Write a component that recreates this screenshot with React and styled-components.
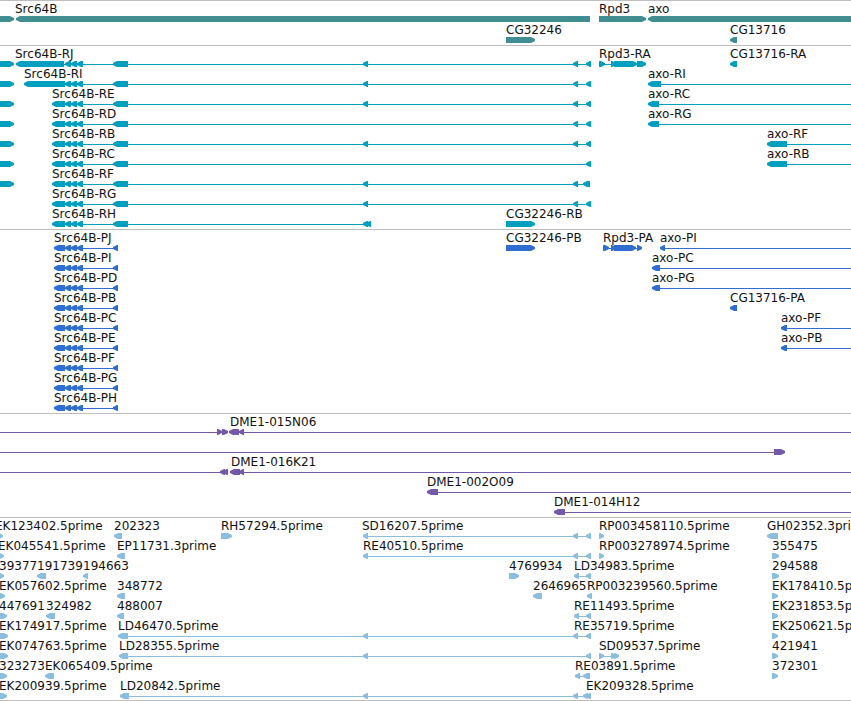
import React from 'react';
import styled, { createGlobalStyle } from 'styled-components';

const GlobalStyle = createGlobalStyle`
  body {
    margin: 0;
    background: #FFFFFF;
  }
`;

const Browser = styled.main`
  overflow: hidden;
  border-bottom: 1px solid #BEBEBE;
  font-family: "DejaVu Sans", Verdana, sans-serif;
  font-size: 12px;
  line-height: 16px;
`;

const Track = styled.section`
  display: grid;
  grid-auto-rows: ${({ $pitch }) => $pitch}px;
  padding-bottom: ${({ $gap }) => $gap}px;
  border-top: 1px solid #BEBEBE;
  color: ${({ $color }) => $color};
`;

const Row = styled.div`
  position: relative;
  display: flex;
  flex-direction: column;
  padding-top: 15px;
`;

const Glyphs = styled.svg`
  display: block;
  flex: none;
  width: 100%;
  height: 6px;
  overflow: visible;
  fill: currentColor;
`;

// labels sit at the genomic position of their feature
const Label = styled.span`
  position: absolute;
  top: 0;
  left: ${({ $x }) => $x}px;
  color: #111111;
  white-space: pre;
`;

const HEAD = 5;
const FAR = 4000;

const fwd = (name, x, exons, to) => ({ name, x, exons, to, dir: 1 });
const rev = (name, x, exons, to) => ({ name, x, exons, to, dir: -1 });
const edge = (end) => fwd('', 0, [[-20, end]]);

const SRC_TAIL = [[65, 71], [71, 77], [77, 83], [113, 128]];
const SRC_FULL = [...SRC_TAIL, [363, 368], [573, 578], [586, 591]];

const srcR = (name, exons, to = 590) => rev(`Src64B-${name}`, 52, [[52, 65], ...exons], to);

const srcP = (name) =>
  rev(`Src64B-${name}`, 54, [[54, 65], [65, 71], [71, 77], [77, 83], [113, 118]], 118);

const LONG_EST = [[363, 368], [573, 578], [586, 591]];

const tracks = [
  {
    id: 'genes',
    color: '#408E92',
    pitch: 21,
    gap: 2,
    rows: [
      [
        edge(14),
        rev('Src64B', 15, [[16, 590]]),
        fwd('Rpd3', 599, [[599, 646]]),
        rev('axo', 648, [[648, FAR]]),
      ],
      [fwd('CG32246', 506, [[506, 535]]), rev('CG13716', 730, [[730, 737]])],
    ],
  },
  {
    id: 'transcripts',
    color: '#009EBF',
    pitch: 20,
    gap: 3,
    rows: [
      [
        edge(14),
        rev('Src64B-RJ', 15, [[16, 64], ...SRC_FULL], 590),
        fwd('Rpd3-RA', 599, [[599, 605], [611, 616], [614, 637], [637, 646]], 640),
        rev('CG13716-RA', 730, [[730, 737]]),
      ],
      [
        edge(14),
        rev('Src64B-RI', 24, [[24, 65], ...SRC_FULL], 590),
        rev('axo-RI', 648, [[648, 661]], FAR),
      ],
      [edge(14), srcR('RE', SRC_FULL), rev('axo-RC', 648, [[648, 659]], FAR)],
      [
        edge(14),
        srcR('RD', [...SRC_TAIL, [573, 578], [586, 591]]),
        rev('axo-RG', 648, [[648, 659]], FAR),
      ],
      [edge(14), srcR('RB', SRC_FULL), rev('axo-RF', 767, [[767, 787]], FAR)],
      [edge(14), srcR('RC', [...SRC_TAIL, [586, 591]]), rev('axo-RB', 767, [[767, 787]], FAR)],
      [edge(14), srcR('RF', [...SRC_TAIL, [363, 368], [573, 578], [583, 590]])],
      [srcR('RG', SRC_FULL)],
      [
        srcR('RH', [...SRC_TAIL, [363, 368], [366, 371]], 371),
        fwd('CG32246-RB', 506, [[506, 535]]),
      ],
    ],
  },
  {
    id: 'proteins',
    color: '#306DD0',
    pitch: 20,
    gap: 3,
    rows: [
      [
        srcP('PJ'),
        fwd('CG32246-PB', 506, [[506, 535]]),
        fwd('Rpd3-PA', 603, [[603, 609], [611, 616], [614, 636], [637, 642]], 640),
        rev('axo-PI', 660, [[660, 665]], FAR),
      ],
      [srcP('PI'), rev('axo-PC', 652, [[652, 660]], FAR)],
      [srcP('PD'), rev('axo-PG', 652, [[652, 660]], FAR)],
      [srcP('PB'), rev('CG13716-PA', 730, [[730, 737]])],
      [srcP('PC'), rev('axo-PF', 781, [[781, 787]], FAR)],
      [srcP('PE'), rev('axo-PB', 781, [[781, 787]], FAR)],
      [srcP('PF')],
      [srcP('PG')],
      [srcP('PH')],
    ],
  },
  {
    id: 'clones',
    color: '#7459A9',
    pitch: 20,
    gap: 3,
    rows: [
      [
        fwd('', 0, [[-20, -10], [217, 222], [222, 228]], 227),
        rev('DME1-015N06', 230, [[229, 239], [239, 244]], FAR),
      ],
      [fwd('', 0, [[-20, -10], [774, 785]], 780)],
      [
        rev('', 0, [[-20, -10], [220, 225], [223, 228]], 228),
        rev('DME1-016K21', 231, [[230, 240], [239, 244]], FAR),
      ],
      [rev('DME1-002O09', 427, [[427, 438]], FAR)],
      [rev('DME1-014H12', 554, [[554, 565]], FAR)],
    ],
  },
  {
    id: 'ests',
    color: '#8ABDDE',
    pitch: 20,
    gap: 2,
    rows: [
      [
        fwd('EK123402.5prime', -5, [[-10, 3]]),
        rev('202323', 114, [[114, 122]]),
        fwd('RH57294.5prime', 221, [[221, 232]]),
        rev('SD16207.5prime', 362, LONG_EST, 590),
        fwd('RP003458110.5prime', 599, [[599, 604]]),
        rev('GH02352.3prime', 767, [[767, 778]]),
      ],
      [
        fwd('EK045541.5prime', -2, [[-10, 4]]),
        rev('EP11731.3prime', 117, [[117, 125]]),
        rev('RE40510.5prime', 363, LONG_EST, 590),
        fwd('RP003278974.5prime', 599, [[599, 604]]),
        fwd('355475', 772, [[772, 779]]),
      ],
      [
        fwd('39377', -1, [[-10, 4]]),
        rev('191739', 37, [[37, 46]]),
        rev('194663', 83, [[83, 88]]),
        fwd('4769934', 509, [[509, 519]]),
        rev('LD34983.5prime', 574, [[574, 579], [586, 591]], 590),
        fwd('294588', 772, [[772, 779]]),
      ],
      [
        fwd('EK057602.5prime', -1, [[-10, 5]]),
        rev('348772', 117, [[117, 125]]),
        rev('2646965', 533, [[533, 542]]),
        rev('RP003239560.5prime', 587, [[587, 592]]),
        fwd('EK178410.5prime', 772, [[772, 778]]),
      ],
      [
        fwd('447691', -1, [[-10, 7]]),
        rev('324982', 46, [[46, 55]]),
        rev('488007', 117, [[117, 124]]),
        rev('RE11493.5prime', 574, [[574, 579], [586, 591]], 590),
        fwd('EK231853.5prime', 772, [[772, 778]]),
      ],
      [
        fwd('EK174917.5prime', -1, [[-10, 8]]),
        rev('LD46470.5prime', 118, [[118, 128], [363, 368]], 573),
        rev('RE35719.5prime', 574, [[573, 578], [586, 591]], 590),
        fwd('EK250621.5prime', 772, [[772, 778]]),
      ],
      [
        fwd('EK074763.5prime', -1, [[-10, 8]]),
        rev('LD28355.5prime', 119, [[119, 128], [363, 368], [586, 591]], 590),
        fwd('SD09537.5prime', 599, [[599, 604], [611, 616], [614, 619]], 617),
        fwd('421941', 772, [[772, 778]]),
      ],
      [
        fwd('323273', -1, [[-10, 7]]),
        rev('EK065409.5prime', 45, [[45, 54]]),
        rev('RE03891.5prime', 575, [[575, 580], [583, 590]], 590),
        fwd('372301', 772, [[772, 778]]),
      ],
      [
        fwd('EK200939.5prime', -1, [[-10, 7]]),
        rev('LD20842.5prime', 120, [[120, 129], [363, 368], [573, 578], [583, 588], [586, 591]], 590),
        rev('EK209328.5prime', 586, []),
      ],
    ],
  },
];

const Exon = ({ from, to, dir }) => {
  const head = Math.min(HEAD, to - from);
  const points =
    dir > 0
      ? `${from},0 ${to - head + 1},0 ${to},2 ${to},4 ${to - head + 1},6 ${from},6`
      : `${to},0 ${from + head - 1},0 ${from},2 ${from},4 ${from + head - 1},6 ${to},6`;
  return <polygon points={points} />;
};

const Feature = ({ exons, to, dir }) => (
  <g>
    {to && exons.length > 0 && (
      <rect x={exons[0][0] + 2} y="3" width={to - exons[0][0] - 2} height="1" />
    )}
    {exons.map(([a, b]) => (
      <Exon key={a} from={a} to={b} dir={dir} />
    ))}
  </g>
);

const App = () => {
  return (
    <>
      <GlobalStyle />
      <Browser>
        {tracks.map((track) => (
          <Track key={track.id} $color={track.color} $pitch={track.pitch} $gap={track.gap}>
            {track.rows.map((row, i) => (
              <Row key={i}>
                <Glyphs aria-hidden="true">
                  {row.map((feature, j) => (
                    <Feature key={j} {...feature} />
                  ))}
                </Glyphs>
                {row
                  .filter((feature) => feature.name)
                  .map((feature) => (
                    <Label key={feature.name} $x={feature.x}>
                      {feature.name}
                    </Label>
                  ))}
              </Row>
            ))}
          </Track>
        ))}
      </Browser>
    </>
  );
};

export default App;
